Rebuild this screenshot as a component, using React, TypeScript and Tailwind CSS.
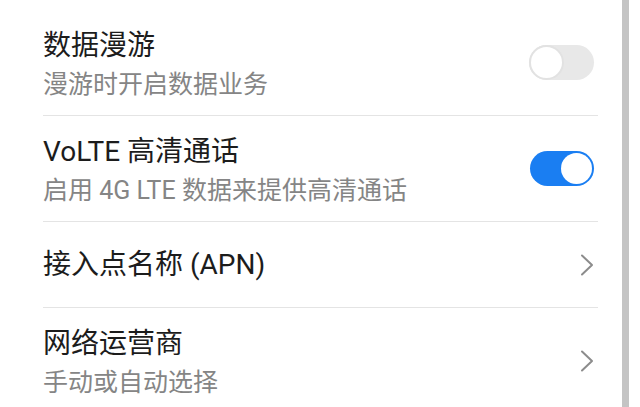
import React from 'react';

type Row =
  | { title: string; sub?: string; kind: 'toggle'; on: boolean }
  | { title: string; sub?: string; kind: 'link' };

const rows: Row[] = [
  { title: '数据漫游', sub: '漫游时开启数据业务', kind: 'toggle', on: false },
  { title: 'VoLTE 高清通话', sub: '启用 4G LTE 数据来提供高清通话', kind: 'toggle', on: true },
  { title: '接入点名称 (APN)', kind: 'link' },
  { title: '网络运营商', sub: '手动或自动选择', kind: 'link' },
];

function Toggle({ on }: { on: boolean }) {
  if (on) {
    return (
      <div className="w-[64px] h-[35px] rounded-full bg-[#1a7ef2] flex items-center justify-end pr-[2px]">
        <div className="w-[31px] h-[31px] rounded-full bg-white" />
      </div>
    );
  }
  return (
    <div className="w-[65px] h-[35px] rounded-full bg-[#e8e8e8] flex items-center justify-start">
      <div className="w-[35px] h-[35px] rounded-full bg-white border-2 border-[#e2e2e2]" />
    </div>
  );
}

function Chevron() {
  return (
    <svg width="14" height="22" viewBox="0 0 14 22" fill="none">
      <polyline points="2,1.5 12,11 2,20.5" stroke="#8c8c8c" strokeWidth="2" strokeLinecap="round" strokeLinejoin="round" />
    </svg>
  );
}

export default function App() {
  return (
    <div
      className="w-[640px] h-[407px] bg-white flex overflow-hidden"
      style={{ fontFamily: 'Roboto, "Noto Sans CJK SC", sans-serif' }}
    >
      <div className="w-[598px] pl-[43px] pt-[10px] flex flex-col shrink-0">
        {rows.map((row) => (
          <div
            key={row.title}
            className={`flex justify-between border-b border-[#e4e4e4] shrink-0 ${
              row.sub ? 'h-[106px]' : 'h-[86px]'
            }`}
          >
            {row.sub ? (
              <div className="flex flex-col pt-[18px]">
                <div className="text-[28px] leading-[36px] text-[#1c1c1c]">{row.title}</div>
                <div className="text-[25px] leading-[32px] mt-[5px] text-[#858585]">{row.sub}</div>
              </div>
            ) : (
              <div className="flex items-center">
                <div className="text-[28px] leading-[36px] text-[#1c1c1c]">{row.title}</div>
              </div>
            )}
            <div className="flex items-center pr-[4px]">
              {row.kind === 'toggle' ? <Toggle on={row.on} /> : <Chevron />}
            </div>
          </div>
        ))}
      </div>
      <div className="w-[7px] ml-[24px] h-full bg-[#c4c4c4] shrink-0" />
    </div>
  );
}
